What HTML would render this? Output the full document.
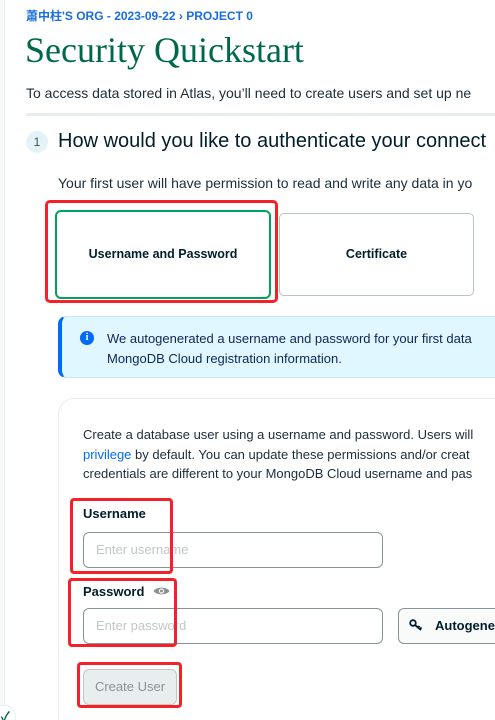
<!DOCTYPE html>
<html style="overflow:hidden"><head><meta charset="utf-8"><style>
*{box-sizing:border-box;margin:0;padding:0}
html,body{width:495px;height:720px;overflow:hidden}
body{background:#fff;font-family:"Liberation Sans","Noto Sans CJK SC",sans-serif;color:#001e2b;position:relative}
.a{position:absolute;white-space:nowrap}
.clip{position:absolute;left:0;top:0;width:495px;height:720px;overflow:hidden}
</style></head><body><div class="clip">
<div class="a" style="left:0;top:0;width:5px;height:720px;background:#f7f8f8;border-right:1px solid #eef0f0"></div>
<div class="a" style="left:26px;top:7px;font-size:12px;font-weight:bold;color:#1a6de0">蕭中柱'S ORG - 2023-09-22 › PROJECT 0</div>
<div class="a" style="left:25px;top:29px;font-family:'Liberation Serif',serif;font-size:36px;color:#00684a">Security Quickstart</div>
<div class="a" style="left:26px;top:85px;font-size:14px;color:#1c2d38">To access data stored in Atlas, you’ll need to create users and set up ne</div>
<div class="a" style="left:26px;top:113px;width:469px;height:3px;background:#e8eded"></div>
<div class="a" style="left:26px;top:131px;width:22px;height:22px;border-radius:50%;background:#e3f4f8;font-size:12px;text-align:center;line-height:22px;color:#3d4f58">1</div>
<div class="a" style="left:58px;top:130px;font-size:20px;color:#001e2b">How would you like to authenticate your connect</div>
<div class="a" style="left:58px;top:175px;font-size:14px;color:#1c2d38">Your first user will have permission to read and write any data in yo</div>
<div class="a" style="left:45px;top:200px;width:233px;height:103px;border:3px solid #f5212a;border-radius:5px"></div>
<div class="a" style="left:55px;top:210px;width:216px;height:89px;border:2px solid #00a35c;border-radius:6px;font-size:12.5px;font-weight:bold;text-align:center;line-height:85px">Username and Password</div>
<div class="a" style="left:279px;top:213px;width:195px;height:83px;border:1px solid #b8c4c2;border-radius:5px;font-size:12.5px;font-weight:bold;text-align:center;line-height:81px">Certificate</div>
<div class="a" style="left:58px;top:316px;width:437px;height:62px;background:#e1f7ff;border:1px solid #c3e7fe;border-right:none;border-left:4px solid #016bf8;border-radius:8px 0 0 8px;overflow:hidden"></div>
<div class="a" style="left:80px;top:331px;width:14px;height:14px;border-radius:50%;background:#016bf8;color:#fff;font-size:10px;font-weight:bold;text-align:center;line-height:14px;font-family:'Liberation Serif',serif">i</div>
<div class="a" style="left:107px;top:329px;width:388px;overflow:hidden;font-size:13px;line-height:20px;color:#0c2657">We autogenerated a username and password for your first data<br>MongoDB Cloud registration information.</div>
<div class="a" style="left:58px;top:398px;width:437px;height:322px;border:1px solid #e8eded;border-right:none;border-bottom:none;border-radius:16px 0 0 0"></div>
<div class="a" style="left:83px;top:425px;width:412px;overflow:hidden;font-size:13px;line-height:19.5px;color:#1c2d38">Create a database user using a username and password. Users will<br><span style="color:#016bf8">privilege</span> by default. You can update these permissions and/or creat<br>credentials are different to your MongoDB Cloud username and pas</div>
<div class="a" style="left:83px;top:506px;font-size:13px;font-weight:bold">Username</div>
<div class="a" style="left:83px;top:532px;width:300px;height:36px;border:1px solid #889397;border-radius:6px;font-size:13px;color:#c1c7c6;padding-left:12px;line-height:34px">Enter username</div>
<div class="a" style="left:83px;top:584px;font-size:13px;font-weight:bold">Password</div>
<svg class="a" style="left:153px;top:585px" width="17" height="12" viewBox="0 0 17 12"><path d="M0.5 6C3 1.5 14 1.5 16.5 6 14 10.5 3 10.5 0.5 6Z" fill="#889397"/><circle cx="8.5" cy="6" r="2.6" fill="#fff"/><circle cx="8.5" cy="6" r="1.5" fill="#889397"/></svg>
<div class="a" style="left:83px;top:608px;width:300px;height:36px;border:1px solid #889397;border-radius:6px;font-size:13px;color:#c1c7c6;padding-left:12px;line-height:34px">Enter password</div>
<div class="a" style="left:398px;top:608px;width:97px;height:36px;overflow:hidden;border:1px solid #889397;border-right:none;border-radius:6px 0 0 6px;background:#f9fbfa;font-size:13px;font-weight:bold;padding-left:36px;line-height:34px">Autogenerate</div>
<svg class="a" style="left:409px;top:619px" width="14" height="13" viewBox="0 0 14 13"><circle cx="4" cy="4" r="2.8" fill="none" stroke="#001e2b" stroke-width="1.8"/><path d="M6 6L12 11M9 8.5L10.5 7M11 10L12.5 8.5" stroke="#001e2b" stroke-width="1.8"/></svg>
<div class="a" style="left:83px;top:669px;width:94px;height:36px;border:1px solid #c1c7c6;border-radius:6px;background:#e8eded;color:#889397;font-size:13px;text-align:center;line-height:34px">Create User</div>
<div class="a" style="left:70px;top:498px;width:103px;height:76px;border:3px solid #f5212a;border-radius:4px"></div>
<div class="a" style="left:68px;top:578px;width:109px;height:69px;border:3px solid #f5212a;border-radius:4px"></div>
<div class="a" style="left:77px;top:662px;width:105px;height:46px;border:3px solid #f5212a;border-radius:4px"></div>
<div class="a" style="left:-8px;top:705px;width:24px;height:24px;border-radius:50%;border:1px solid #e8eded;background:#fff;color:#00684a;font-size:13px;font-weight:bold;text-align:right;padding-right:5px">✓</div>
</div></body></html>
